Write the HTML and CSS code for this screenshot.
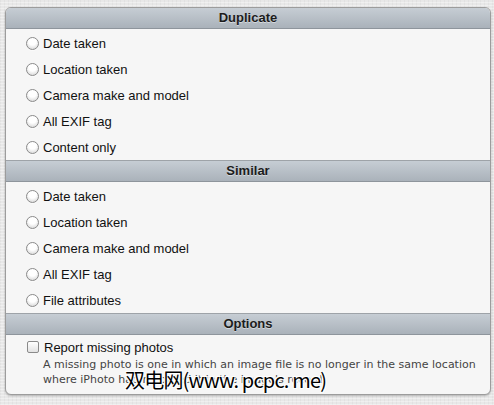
FILE: index.html
```html
<!DOCTYPE html>
<html>
<head>
<meta charset="utf-8">
<link rel="stylesheet" href="styles.css">
</head>
<body>
<div class="panel">
  <div class="header first">Duplicate</div>
  <div class="section">
    <div class="row"><span class="radio"></span><span class="label">Date taken</span></div>
    <div class="row"><span class="radio"></span><span class="label">Location taken</span></div>
    <div class="row"><span class="radio"></span><span class="label">Camera make and model</span></div>
    <div class="row"><span class="radio"></span><span class="label">All EXIF tag</span></div>
    <div class="row"><span class="radio"></span><span class="label">Content only</span></div>
  </div>
  <div class="header">Similar</div>
  <div class="section">
    <div class="row"><span class="radio"></span><span class="label">Date taken</span></div>
    <div class="row"><span class="radio"></span><span class="label">Location taken</span></div>
    <div class="row"><span class="radio"></span><span class="label">Camera make and model</span></div>
    <div class="row"><span class="radio"></span><span class="label">All EXIF tag</span></div>
    <div class="row"><span class="radio"></span><span class="label">File attributes</span></div>
  </div>
  <div class="header">Options</div>
  <div class="options">
    <div class="row check-row"><span class="checkbox"></span><span class="label">Report missing photos</span></div>
    <p class="desc">A missing photo is one in which an image file is no longer in the same location<br>where iPhoto had recorded it in the image's record.</p>
  </div>
</div>
<div class="watermark">双电网(www. pcpc. me)</div>
</body>
</html>
```
FILE: styles.css
```css
html, body {
  margin: 0;
  padding: 0;
}
body {
  width: 494px;
  height: 405px;
  overflow: hidden;
  position: relative;
  background-color: #e8e8e8;
  background-image:
    repeating-linear-gradient(0deg, rgba(255,255,255,0.35) 0 1px, transparent 1px 3px),
    repeating-linear-gradient(90deg, rgba(0,0,0,0.03) 0 1px, transparent 1px 4px);
  font-family: "Liberation Sans", Arial, sans-serif;
  color: #111;
}
.panel {
  margin: 7px 0 0 5px;
  width: 486px;
  height: 388px;
  box-sizing: border-box;
  border: 1px solid #9c9c9c;
  border-radius: 6px;
  background: #f6f6f6;
  overflow: hidden;
  box-shadow: 0 1px 2px rgba(0,0,0,0.25);
}
.header {
  height: 22px;
  box-sizing: border-box;
  border-top: 1px solid #9ea3a8;
  border-bottom: 1px solid #8e959c;
  background: linear-gradient(#c6cdd4, #aab2ba);
  text-align: center;
  font-weight: bold;
  font-size: 13px;
  line-height: 20px;
  color: #1c1c1c;
  text-shadow: 0 1px 0 rgba(255,255,255,0.45);
}
.header.first {
  border-top: none;
  height: 21px;
  line-height: 20px;
}
.section {
  display: flex;
  flex-direction: column;
  padding: 1px 0 0 0;
}
.row {
  height: 26px;
  display: flex;
  align-items: center;
  padding-left: 20px;
  font-size: 13px;
}
.radio {
  width: 13px;
  height: 13px;
  box-sizing: border-box;
  border-radius: 50%;
  border: 1px solid #8a8a8a;
  background: radial-gradient(circle at 50% 30%, #ffffff 0 40%, #e6e6e6 70%, #d4d4d4 100%);
  box-shadow: 0 1px 0 rgba(255,255,255,0.6);
  margin-right: 4px;
  flex: none;
}
.checkbox {
  width: 12px;
  height: 12px;
  box-sizing: border-box;
  border-radius: 2px;
  border: 1px solid #8a8a8a;
  background: linear-gradient(#ffffff, #e2e2e2);
  margin-right: 5px;
  margin-left: 1px;
  flex: none;
}
.options {
  display: flex;
  flex-direction: column;
}
.check-row {
  height: 24px;
}
.desc {
  margin: -2px 0 0 37px;
  font-family: "DejaVu Sans", sans-serif;
  font-size: 11px;
  line-height: 15px;
  color: #444;
}
.watermark {
  position: absolute;
  left: 125px;
  top: 367px;
  font-family: "Noto Sans CJK SC", "DejaVu Sans", sans-serif;
  font-size: 20px;
  line-height: 26px;
  color: #000;
  text-shadow: 1px 1px 0 #fff, -1px -1px 0 #fff, 1px -1px 0 #fff, -1px 1px 0 #fff;
  letter-spacing: -0.8px;
}
```
